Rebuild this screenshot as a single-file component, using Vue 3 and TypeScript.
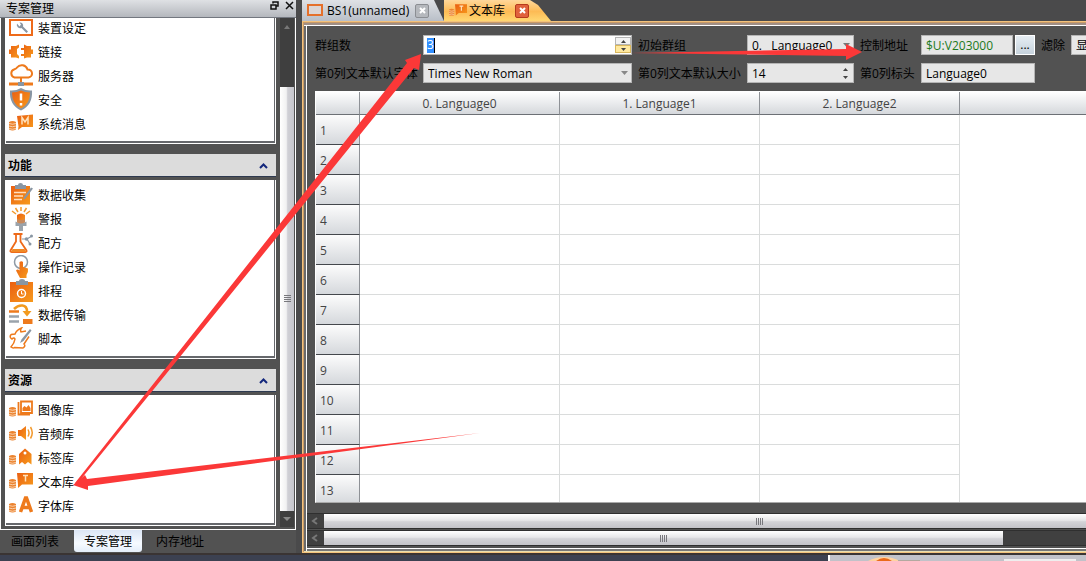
<script setup lang="ts">
import { ref } from 'vue'

interface Item {
  icon: string
  label: string
}
interface Group {
  title: string
  items: Item[]
}

const system: Item[] = [
  { icon: 'device', label: '装置设定' },
  { icon: 'link', label: '链接' },
  { icon: 'server', label: '服务器' },
  { icon: 'shield', label: '安全' },
  { icon: 'message', label: '系统消息' },
]

const groups: Group[] = [
  {
    title: '功能',
    items: [
      { icon: 'collect', label: '数据收集' },
      { icon: 'alarm', label: '警报' },
      { icon: 'recipe', label: '配方' },
      { icon: 'operate', label: '操作记录' },
      { icon: 'schedule', label: '排程' },
      { icon: 'transfer', label: '数据传输' },
      { icon: 'script', label: '脚本' },
    ],
  },
  {
    title: '资源',
    items: [
      { icon: 'image', label: '图像库' },
      { icon: 'audio', label: '音频库' },
      { icon: 'tag', label: '标签库' },
      { icon: 'text', label: '文本库' },
      { icon: 'font', label: '字体库' },
    ],
  },
]

const sideTabs = ['画面列表', '专案管理', '内存地址']
const activeTab = ref('专案管理')

const columns = ['0. Language0', '1. Language1', '2. Language2']
const rowCount = 13

const groupCount = ref('3')
const address = ref('$U:V203000')
const fontSize = ref('14')
const header = ref('Language0')
</script>

<template>
  <div class="app">
    <svg class="defs" width="0" height="0" aria-hidden="true">
      <defs>
        <linearGradient id="og" x1="0" y1="0" x2="1" y2="1">
          <stop offset="0" stop-color="#ea5f12" />
          <stop offset="1" stop-color="#f79a1c" />
        </linearGradient>
        <g id="db">
          <path d="M0 10q3.500-2 7 0v7.500q-3.500 2-7 0z" fill="#ec8430" />
          <path d="M0 11.500q3.500 1.500 7 0M0 14q3.500 1.500 7 0M0 16.500q3.500 1.500 7 0" stroke="#fbe3cc" stroke-width=".8" fill="none" />
        </g>
        <symbol id="device" viewBox="0 0 24 24">
          <rect x="1" y="4" width="22" height="15" fill="#fff" stroke="#ee6a1a" stroke-width="2" />
          <path d="M8 7.500a3.500 3.500 0 0 0 4.500 4.500l5 5 1.500-1.500-5-5a3 3 0 0 0-3.500-4l1.500 2-1.500 2z" fill="#8996a3" />
        </symbol>
        <symbol id="link" viewBox="0 0 24 24">
          <path d="M0 9.500h2V6h5l3-1.500v3L8 9v5l2 2v2.500L7 17.500H2V14H0z" fill="url(#og)" />
          <path d="M24 9.500h-2V6h-4l-3-1.500V8h-3v2h3v4h-3v2h3v2.500l3-1h4V14h2z" fill="url(#og)" />
        </symbol>
        <symbol id="server" viewBox="0 0 24 24">
          <path d="M6 13.500H5.500a4.200 4.200 0 0 1-.5-8C7 4.500 7 5 8 3.500a6 6 0 0 1 10.500 2 4 4 0 0 1 1 8H6z" fill="none" stroke="#ee7a1c" stroke-width="2" />
          <path d="M12 14v4" stroke="#ee7a1c" stroke-width="2" />
          <path d="M0 20h24" stroke="#ee7a1c" stroke-width="3" />
          <rect x="9" y="18" width="6" height="4" fill="#8996a3" />
        </symbol>
        <symbol id="shield" viewBox="0 0 24 24">
          <path d="M12 0q5 3 11 2.500Q24 17 12 22.500 0 17 1 2.500 7 3 12 0z" fill="#8996a3" />
          <path d="M12 2.500q4 2 9 2Q21 16 12 20.500 3 16 3 4.500q5 0 9-2z" fill="url(#og)" />
          <path d="M12 5.500v7M12 15v2.500" stroke="#fff" stroke-width="2.500" />
        </symbol>
        <symbol id="message" viewBox="0 0 24 24">
          <use href="#db" />
          <path d="M8 4l16-1.500v12.500H13l-4 3 .5-3.500z" fill="url(#og)" />
          <path d="M13 12.500V5.500l3 4.500 3-4.500v7" stroke="#ffe3bd" stroke-width="1.500" fill="none" />
        </symbol>
        <symbol id="collect" viewBox="0 0 24 24">
          <path d="M2 3h19v18.500H2z" fill="url(#og)" />
          <path d="M6 2h3q0-2 2.500-2T14 2h3v4H6z" fill="#8996a3" />
          <path d="M5 9.500h12M5 13h9M5 16.500h8" stroke="#ffe0c0" stroke-width="1.500" />
          <path d="M24 5.500l-7.500 10-2 1 .5-2.500 7-9.500z" fill="#8996a3" />
        </symbol>
        <symbol id="alarm" viewBox="0 0 24 24">
          <path d="M8 8q4-3 8 0v6q-4 2.500-8 0z" fill="url(#og)" />
          <path d="M6.500 14.500q5.500 3 11 0V19h-11z" fill="#9aa3ab" />
          <path d="M8 12q4 2 8 0v3.500q-4 2-8 0zM10 20h4v4h-4z" fill="#c98a5c" />
          <path d="M10 19h4v5h-4z" fill="#9aa3ab" />
          <path d="M3 4l4 3M6.500 1l2.500 4M12 0v4M17.500 1L15 5M21 4l-4 3" stroke="#f29a2e" stroke-width="1.500" />
        </symbol>
        <symbol id="recipe" viewBox="0 0 24 24">
          <path d="M4.500 3h9M7 3.500v7l-5.500 9q-.5 1.500 1 1.500h14q1.500 0 1-1.500l-6-9v-7" fill="none" stroke="#ee6a1a" stroke-width="1.800" />
          <path d="M3.500 18h12l2 3H2z" fill="#f08a26" />
          <path d="M13 8h5l5-3M18 8l3 5" stroke="#8996a3" stroke-width="1.200" fill="none" />
          <circle cx="17.500" cy="8" r="1.800" fill="#8996a3" />
          <circle cx="22.500" cy="5" r="1.500" fill="#8996a3" />
          <circle cx="21" cy="13" r="1.500" fill="#8996a3" />
        </symbol>
        <symbol id="operate" viewBox="0 0 24 24">
          <circle cx="12" cy="7" r="6.500" fill="none" stroke="#8e9aa5" stroke-width="1.500" />
          <path d="M10.500 7q2-1.500 3.500 0v5l5 1.500q.5 4-1.500 6.500v3h-6.500L7 15.500q1.500-2 3.500 0z" fill="url(#og)" />
        </symbol>
        <symbol id="schedule" viewBox="0 0 24 24">
          <path d="M1 3h23v20H1z" fill="url(#og)" />
          <path d="M7 2h3q0-2 3-2t3 2h3v4H7z" fill="#8996a3" />
          <circle cx="12.500" cy="14.500" r="4" fill="none" stroke="#fff" stroke-width="1.500" />
          <path d="M12.500 12v3h2" fill="none" stroke="#fff" />
        </symbol>
        <symbol id="transfer" viewBox="0 0 24 24">
          <path d="M0 8.500h10" stroke="#ee7a1c" stroke-width="2.500" />
          <path d="M14 18.500h9.500" stroke="#ee7a1c" stroke-width="5" />
          <path d="M0 13.500h10M0 18.500h10" stroke="#9aa3ab" stroke-width="2.500" />
          <path d="M5 6Q9 2 13.500 2.500T18 8.500" fill="none" stroke="#f29a1e" stroke-width="2.500" />
          <path d="M13.500 8H22.500L18 13.500z" fill="#f29a1e" />
        </symbol>
        <symbol id="script" viewBox="0 0 24 24">
          <path d="M2 7.500l4-.5q1.500-4 6.500-6-1.500 2-.5 4l5-1M2 7.500q-2 3 1 4.500 2-2 3 0-.5 4-4 8 2 1.500 3.500.500l8.500.5q3-2 1-4l5-7.500" fill="none" stroke="#ee7a1c" stroke-width="1.500" />
          <path d="M21 2L12.500 12.500l-1.500 3.500 3.500-2L22.500 3.500z" fill="#8996a3" />
        </symbol>
        <symbol id="image" viewBox="0 0 24 24">
          <use href="#db" />
          <path d="M9.500 4v13.500M9 16.500h12M12 3.500h11v11.500H12z" fill="none" stroke="#ee7a1c" stroke-width="1.800" />
          <path d="M13.500 13V10l2-2 2 1.500L19.500 7l2 3v3z" fill="#ee7a1c" />
        </symbol>
        <symbol id="audio" viewBox="0 0 24 24">
          <use href="#db" />
          <path d="M9 8h3L17 4v14l-5-4H9z" fill="url(#og)" />
          <path d="M19 7.500q2 3.500 0 7M21.500 5q3.500 6 0 11.500" fill="none" stroke="#f29a2e" stroke-width="1.500" />
        </symbol>
        <symbol id="tag" viewBox="0 0 24 24">
          <use href="#db" />
          <path d="M10 8l6-5.500L22.500 8v10.500L19 16l-3 2.500-3-2.500-3 2.500z" fill="url(#og)" />
          <circle cx="16" cy="7" r="1.500" fill="#fff" />
        </symbol>
        <symbol id="text" viewBox="0 0 24 24">
          <use href="#db" />
          <path d="M8 3h16v11.500H13L9 18v-3.500z" fill="url(#og)" />
          <path d="M14 5.500h5M16.500 5.500v6" stroke="#ffe3bd" stroke-width="1.500" />
        </symbol>
        <symbol id="font" viewBox="0 0 24 24">
          <use href="#db" />
          <path d="M11.500 18L16.500 4h1L22.500 18M13.500 13.500h7" fill="none" stroke="#ee7a1c" stroke-width="3.500" />
        </symbol>
      </defs>
    </svg>

    <div class="work">
      <aside class="side">
        <header class="side-title">
          <span>专案管理</span>
          <button class="tool" aria-label="浮动">
            <svg width="9" height="9" viewBox="0 0 9 9"><path d="M3 2.500V1h5v4H6.500M1 4h5v4H1z" fill="none" stroke="#111" stroke-width="1.500" /></svg>
          </button>
          <button class="tool" aria-label="关闭">
            <svg width="9" height="9" viewBox="0 0 9 9"><path d="M1 1l7 7M8 1L1 8" stroke="#111" stroke-width="1.500" /></svg>
          </button>
        </header>
        <div class="side-body">
          <nav class="tree">
            <ul class="panel first">
              <li v-for="item in system" :key="item.label">
                <svg class="icon" width="24" height="24"><use :href="'#' + item.icon" /></svg>
                <span>{{ item.label }}</span>
              </li>
            </ul>
            <template v-for="group in groups" :key="group.title">
              <button class="group">
                <span>{{ group.title }}</span>
                <svg width="9" height="6" viewBox="0 0 9 6"><path d="M1 5l3.500-3.500L8 5" fill="none" stroke="#13277c" stroke-width="2" /></svg>
              </button>
              <ul class="panel">
                <li v-for="item in group.items" :key="item.label">
                  <svg class="icon" width="24" height="24"><use :href="'#' + item.icon" /></svg>
                  <span>{{ item.label }}</span>
                </li>
              </ul>
            </template>
          </nav>
          <div class="vbar">
            <svg class="varrow" width="14" height="16"><path d="M4 11l3-4 3 4z" fill="#777" /></svg>
            <div class="vgap"></div>
            <div class="vthumb"><i class="vgrip"></i></div>
            <svg class="varrow" width="14" height="16"><path d="M3 6h8l-4 4z" fill="#888" /></svg>
          </div>
        </div>
        <div class="side-tabs">
          <button
            v-for="tab in sideTabs"
            :key="tab"
            :class="{ on: tab === activeTab }"
            @click="activeTab = tab"
          >{{ tab }}</button>
        </div>
      </aside>

      <main class="main">
        <div class="tabs">
          <div class="tab plain">
            <svg class="tab-icon" width="16" height="14"><rect x="1" y="1" width="14" height="10" fill="#dcd6d6" stroke="#e5702b" stroke-width="2" /></svg>
            <span>BS1(unnamed)</span>
            <button class="close" aria-label="关闭 BS1">
              <svg width="7" height="7" viewBox="0 0 7 7"><path d="M1 1l5 5M6 1L1 6" stroke="#fff" stroke-width="2" /></svg>
            </button>
          </div>
          <div class="tab current">
            <svg class="tab-icon" width="18" height="18"><use href="#text" /></svg>
            <span>文本库</span>
            <button class="close red" aria-label="关闭 文本库">
              <svg width="7" height="7" viewBox="0 0 7 7"><path d="M1 1l5 5M6 1L1 6" stroke="#fff" stroke-width="2" /></svg>
            </button>
          </div>
        </div>

        <section class="frame">
          <form class="form" @submit.prevent>
            <label for="count">群组数</label>
            <div class="field white">
              <input id="count" v-model="groupCount" class="picked" />
              <span class="spin hot">
                <button type="button" aria-label="增加"><svg width="5" height="3"><path d="M0 3l2.500-3L5 3z" fill="#444" /></svg></button>
                <button type="button" aria-label="减少"><svg width="5" height="3"><path d="M0 0h5L2.500 3z" fill="#444" /></svg></button>
              </span>
            </div>
            <label for="initial" class="pad">初始群组</label>
            <div class="field">
              <select id="initial"><option>0.&nbsp;&nbsp; Language0</option></select>
              <svg class="caret" width="7" height="4"><path d="M0 0h7L3.500 4z" fill="#777" /></svg>
            </div>
            <label for="address" class="pad">控制地址</label>
            <div class="pair">
              <div class="field"><input id="address" v-model="address" class="green" /></div>
              <button type="button" class="more">...</button>
            </div>
            <label for="filter" class="pad">滤除</label>
            <div class="field pale"><select id="filter"><option>显示全部</option></select></div>

            <label for="family">第0列文本默认字体</label>
            <div class="field">
              <select id="family"><option>Times New Roman</option></select>
              <svg class="caret" width="7" height="4"><path d="M0 0h7L3.500 4z" fill="#888" /></svg>
            </div>
            <label for="size" class="pad">第0列文本默认大小</label>
            <div class="field">
              <input id="size" v-model="fontSize" />
              <span class="spin">
                <button type="button" aria-label="增大"><svg width="5" height="3"><path d="M0 3l2.500-3L5 3z" fill="#444" /></svg></button>
                <button type="button" aria-label="减小"><svg width="5" height="3"><path d="M0 0h5L2.500 3z" fill="#444" /></svg></button>
              </span>
            </div>
            <label for="header" class="pad">第0列标头</label>
            <div class="field"><input id="header" v-model="header" /></div>
          </form>

          <div class="sheet">
            <table>
              <thead>
                <tr>
                  <th class="corner"></th>
                  <th v-for="c in columns" :key="c" class="col">{{ c }}</th>
                  <th class="rest"></th>
                </tr>
              </thead>
              <tbody>
                <tr v-for="n in rowCount" :key="n">
                  <th>{{ n }}</th>
                  <td v-for="c in columns" :key="c"></td>
                  <td class="rest"></td>
                </tr>
              </tbody>
            </table>
          </div>

          <div class="hbar">
            <svg class="harrow" width="17" height="14"><path d="M10 4L6 7l4 3" fill="none" stroke="#777" stroke-width="2" /></svg>
            <div class="hthumb long"><i class="hgrip"></i></div>
          </div>
          <div class="hbar">
            <svg class="harrow" width="17" height="14"><path d="M10 4L6 7l4 3" fill="none" stroke="#777" stroke-width="2" /></svg>
            <div class="hthumb"><i class="hgrip"></i></div>
          </div>
        </section>
      </main>
    </div>

    <footer class="bottom">
      <div class="dock">
        <svg width="180" height="6">
          <path d="M38 6q16-8 32 0z" fill="#ffd3a0" />
          <path d="M46 6q8-6 16 0z" fill="#ea6a1a" />
          <path d="M68 5h22v1H68z" fill="#b3a9a0" />
        </svg>
        <i class="dock-field"></i>
      </div>
    </footer>

    <svg class="marks" width="1086" height="561" viewBox="0 0 1086 561" aria-hidden="true">
      <g fill="#fb3838">
        <path d="M75 483L407 63l-2-3 16-6-2 16-5-2L77 484z" />
        <path d="M631 53l215-4v-5l16 8-16 8v-4z" />
        <path d="M480 433L87 479l-2-4-12 10 15 5v-4z" />
      </g>
    </svg>
  </div>
</template>

<style>
body {
  margin: 0;
  overflow: hidden;
}
</style>

<style scoped>
.app {
  position: relative;
  display: flex;
  flex-direction: column;
  height: 100vh;
  overflow: hidden;
  background: #4a4a4b;
  color: #000;
  font: 12px/16px "Open Sans", "Noto Sans CJK SC", sans-serif;
}
.app * {
  box-sizing: border-box;
}
button,
input,
select {
  margin: 0;
  padding: 0;
  border: 0;
  background: none;
  color: inherit;
  font: inherit;
  outline: 0;
}
ul {
  margin: 0;
  padding: 0;
  list-style: none;
}
svg {
  display: block;
  flex: none;
}
.defs {
  position: absolute;
}
.marks {
  position: absolute;
  top: 0;
  left: 0;
  pointer-events: none;
}
.work {
  display: flex;
  flex: 1;
  min-height: 0;
  gap: 6px;
}

.side {
  display: flex;
  flex-direction: column;
  flex: none;
  width: 296px;
  background: #525252;
}
.side-title {
  display: flex;
  flex: none;
  align-items: flex-start;
  gap: 6px;
  height: 18px;
  padding: 0 2px 0 6px;
  border-bottom: 1px solid #73777f;
  background: linear-gradient(#dfe1e4, #b4b7bd);
}
.side-title span {
  flex: 1;
  line-height: 17px;
}
.tool {
  padding-top: 1px;
}
.side-body {
  display: flex;
  flex: 1;
  min-height: 0;
  padding: 0 1px 2px 2px;
  border: 1px solid #fff;
  border-top: 0;
  overflow: hidden;
}
.tree {
  flex: 1;
  margin: 0 4px 0 2px;
  overflow: hidden;
}
.panel {
  padding: 3px 0 7px 3px;
  margin-bottom: 10px;
  background: #fff;
  border: 1px solid #fff;
  border-width: 0 1px 1px;
  box-shadow: inset 0 -2px #66686c, inset -1px 0 #66686c;
}
.panel.first {
  padding-top: 0;
  margin-top: -2px;
}
.panel li {
  display: flex;
  align-items: center;
  gap: 5px;
  height: 24px;
}
.panel li span {
  padding-top: 2px;
}
.group {
  display: flex;
  align-items: center;
  justify-content: space-between;
  width: 100%;
  height: 23px;
  margin-bottom: 3px;
  padding: 1px 8px 0 3px;
  border-bottom: 1px solid #2e3a50;
  background: #dcdcdc;
  font-weight: 700;
}
.group span {
  padding-top: 1px;
}
.vbar {
  display: flex;
  flex-direction: column;
  width: 14px;
  background: #3f3f3f;
}
.vgap {
  height: 53px;
}
.vthumb {
  display: grid;
  flex: 1;
  place-items: center;
  background: linear-gradient(90deg, #fff, #f1f1f2 45%, #d0d0d6 55%, #c5c5cb);
}
.vgrip {
  width: 7px;
  height: 8px;
  background: repeating-linear-gradient(#77777c 0 1px, transparent 1px 2px);
}
.side-tabs {
  display: flex;
  height: 23px;
  padding: 0 4px;
}
.side-tabs button {
  padding: 2px 10px 0;
  margin: 0 2px 0 -3px;
  height: 22px;
  border-radius: 0 0 3px 3px;
}
.side-tabs button:first-child {
  margin: 0 5px 0 -3px;
}
.side-tabs .on {
  margin: 0 7px 0 0;
  background: linear-gradient(#dce6f5, #f6faff 60%, #e4edfa);
}

.main {
  display: flex;
  flex: 1;
  flex-direction: column;
  min-width: 0;
}
.tabs {
  display: flex;
  height: 21px;
}
.tab {
  display: flex;
  align-items: center;
  height: 21px;
}
.tab-icon {
  margin-right: 4px;
}
.plain {
  width: 142px;
  padding-left: 5px;
  background: linear-gradient(#dfe1e5, #b9bfc8);
  clip-path: polygon(0 0, 132px 0, 142px 21px, 0 21px);
}
.current {
  width: 107px;
  padding-left: 5px;
  background: linear-gradient(#ffd79a, #fdbb55 55%, #ffd772);
  clip-path: polygon(0 0, 86px 0, 94px 5px, 107px 21px, 0 21px);
}
.current .tab-icon {
  margin-right: 2px;
}
.close {
  display: grid;
  place-items: center;
  width: 14px;
  height: 14px;
  margin-left: 10px;
  border: 1px solid #8b8e93;
  border-radius: 2px;
  background: #b5b8bd;
}
.plain .close {
  margin-left: 6px;
}
.close.red {
  border-color: #b53a1d;
  background: #e0613c;
}
.frame {
  display: flex;
  flex: 1;
  flex-direction: column;
  min-height: 0;
  border: 1px solid #f3c27c;
  border-width: 1px 0 1px 1px;
  box-shadow: inset 0 1px #c89a68, inset 1px 0 #c89a68, inset 0 -1px #e8dfb0, inset 0 3px #a08f86, inset 0 4px #fff, inset 3px 0 #6a6a6a, inset 4px 0 #fff, inset 0 -3px #777, inset 0 -4px #fff;
  background: #525252;
  padding: 14px 0 6px 4px;
}
.form {
  display: grid;
  grid-template-columns: 108px 209px 115px 107px 67px 114px 36px 100px;
  grid-auto-rows: 20px;
  row-gap: 8px;
  padding-left: 8px;
  margin: -1px 0 8px;
}
.form label {
  align-self: center;
  padding-top: 2px;
  line-height: 20px;
  white-space: nowrap;
}
.form .pad {
  padding-left: 6px;
}
.field {
  display: flex;
  align-items: center;
  min-width: 0;
  flex: 1;
  border: 1px solid #b5b5b5;
  background: #e7e7e7;
}
.white {
  background: #fff;
}
.field input,
.field select {
  flex: 1;
  width: 20px;
  min-width: 0;
  height: 18px;
  padding: 1px 4px 0;
  appearance: none;
}
.field input.picked {
  flex: none;
  width: 8px;
  margin-left: 3px;
  margin-right: auto;
  height: 15px;
  padding: 0;
  background: #3390ff;
  color: #fff;
  border-right: 1px solid #000;
}
.field input.green {
  color: #1c7a1c;
}
.caret {
  margin-right: 3px;
}
.spin {
  display: flex;
  flex-direction: column;
  width: 16px;
}
.spin button {
  display: grid;
  place-items: center;
  height: 8px;
}
.hot button {
  border: 1px solid #b5b5b5;
  background: #f3f3f3;
}
.hot button + button {
  border-color: #d9b75c;
  background: #ffe9a0;
}
.pair {
  display: flex;
  gap: 2px;
}
.more {
  width: 20px;
  border: 1px solid #fff;
  background: linear-gradient(#e6edf3, #c6d2dc);
  line-height: 12px;
}

.sheet {
  flex: 1;
  min-height: 0;
  margin: 0 0 10px 8px;
  border: 1px solid #fff;
  border-bottom-color: #aaa;
  border-right: 0;
  background: #fff;
  overflow: hidden;
}
table {
  width: 100%;
  border-collapse: separate;
  border-spacing: 0;
  table-layout: fixed;
  color: #444;
}
th {
  padding: 2px 0 0 4px;
  font-weight: 400;
  text-align: left;
}
thead th {
  height: 23px;
  padding: 2px 0 0;
  border-right: 1px solid #8e9196;
  border-bottom: 1px solid #6c7075;
  background: linear-gradient(#fff, #d5d8dc);
  text-align: center;
}
.corner {
  width: 44px;
}
.col {
  width: 200px;
}
tbody th {
  height: 30px;
  border-right: 1px solid #8e9196;
  border-bottom: 1px solid #44474c;
  background: linear-gradient(#fcfcfc, #d5d8dc);
}
td {
  border-right: 1px solid #dadcdc;
  border-bottom: 1px solid #dadcdc;
}
td.rest,
th.rest {
  border-right: 0;
}
td.rest {
  border-bottom: 0;
}
.hbar {
  display: flex;
  height: 16px;
  border: 1px solid #2f2f2f;
  border-width: 1px 0;
  background: #404040;
}
.hbar + .hbar {
  margin-top: 1px;
}
.hthumb {
  display: grid;
  flex: none;
  place-items: center;
  width: 679px;
  background: linear-gradient(#fff, #e6e6e8 45%, #d3d3d7 55%, #c3c3c8);
}
.long {
  width: 872px;
}
.hgrip {
  width: 8px;
  height: 7px;
  background: repeating-linear-gradient(90deg, #77777c 0 1px, transparent 1px 2px);
}

.bottom {
  display: flex;
  justify-content: flex-end;
  height: 8px;
  background: #3c4151;
  border-top: 2px solid #3a3433;
}
.dock {
  display: flex;
  width: 258px;
  border-left: 2px solid #fff;
  background: #c1c2c9;
}
.dock-field {
  width: 72px;
  margin: 4px 0 0 -6px;
  background: #eee;
}
</style>
